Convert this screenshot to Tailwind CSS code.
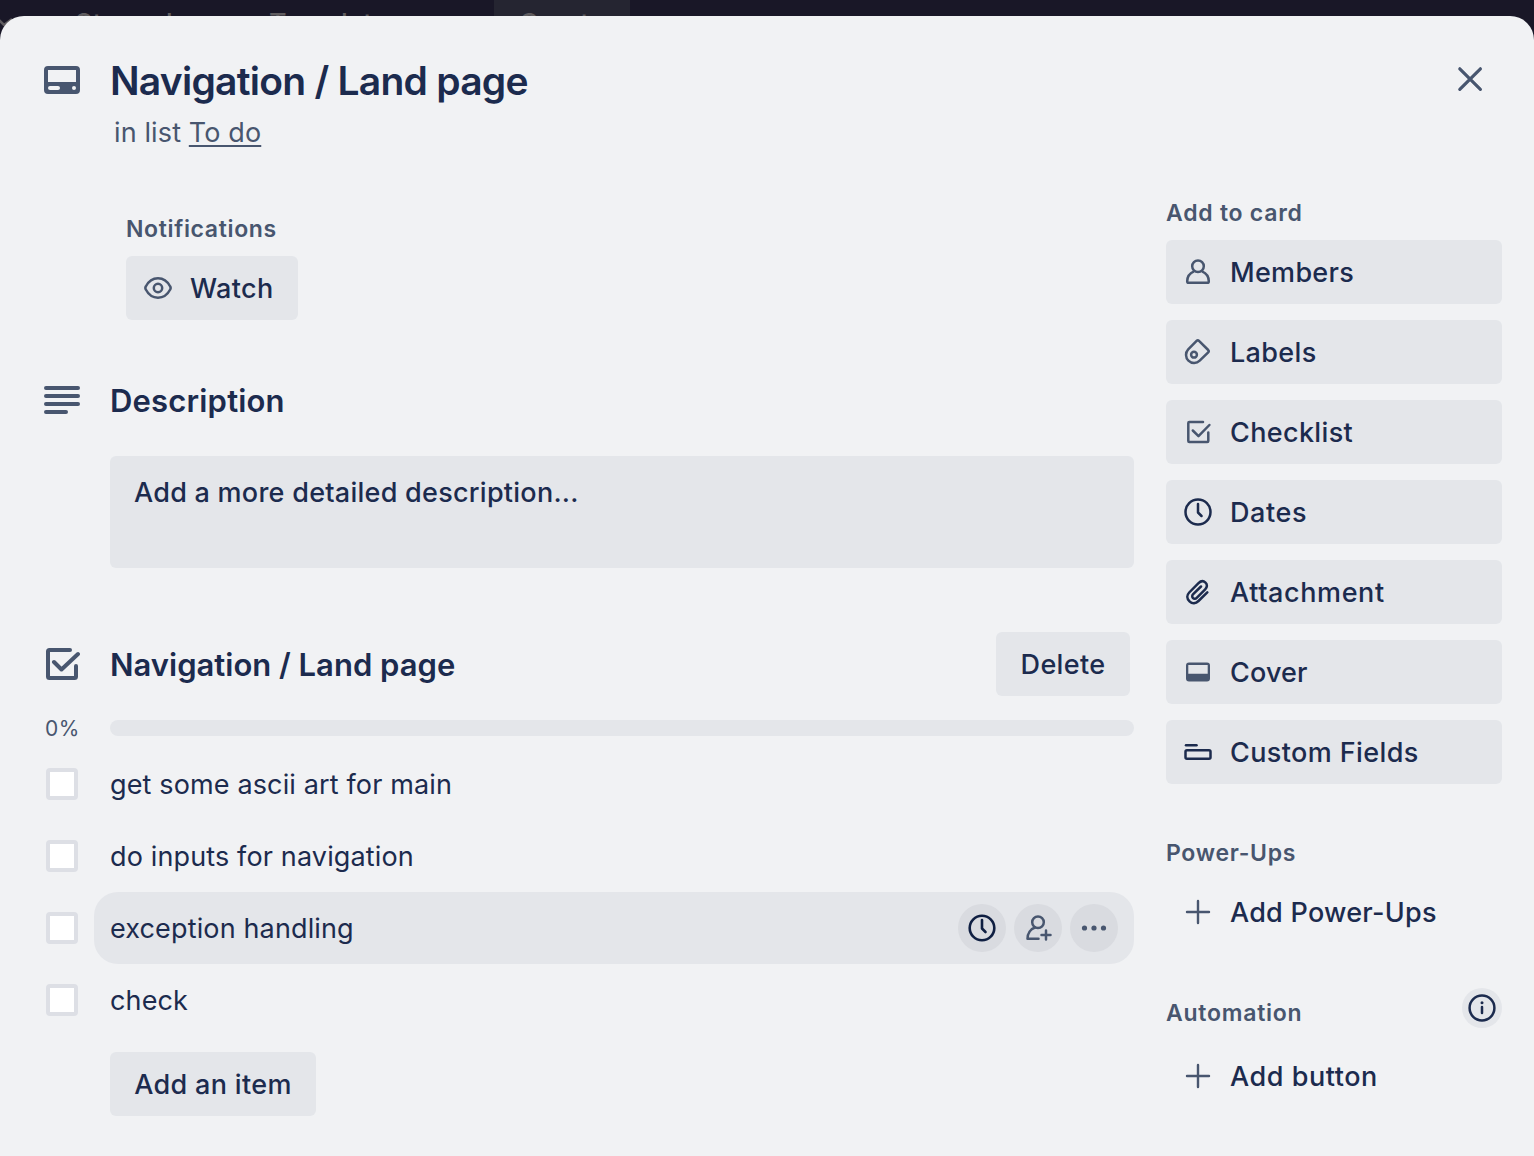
<!DOCTYPE html>
<html lang="en">
<head>
<meta charset="utf-8">
<title>Card</title>
<script src="https://cdn.jsdelivr.net/npm/@tailwindcss/browser@4"></script>
</head>
<body class="relative h-[1156px] w-[1534px] overflow-hidden bg-[#191727] font-['Inter',sans-serif] text-[27px] text-[#1c2b4e]">
<header class="absolute inset-x-0 top-0 flex h-16 text-[27px] leading-[32px] font-medium text-[#5f5c5f]">
  <svg class="absolute top-[18px] left-0 h-2 w-4" viewBox="0 0 16 8" fill="none" stroke="#5f5c5f" stroke-width="2.500"><path d="M-1 2l5 5 8-6"/></svg>
  <span class="absolute left-[75px] top-2 tracking-[0.4px]">Starred</span>
  <span class="absolute left-[269px] top-2">Templates</span>
  <span class="absolute left-[494px] top-0 h-16 w-[136px] bg-[#252531] pl-[25px] pt-2">Create</span>
</header>
<main class="relative mt-4 h-[1140px] overflow-hidden rounded-t-[24px] bg-[#f1f2f4]">
  <div class="flex h-[184px] items-start pt-10">
    <svg class="ml-[44px] mt-[10px] h-7 w-9 shrink-0" viewBox="0 0 36 28"><path fill="#48566f" fill-rule="evenodd" d="M4 0h28a4 4 0 0 1 4 4v20a4 4 0 0 1-4 4H4a4 4 0 0 1-4-4V4a4 4 0 0 1 4-4ZM4 4v12h28V4ZM6 20a2 2 0 0 0 0 4h8a2 2 0 0 0 0-4ZM30 20a2 2 0 1 0 0 4 2 2 0 0 0 0-4Z"/></svg>
    <div class="ml-[30px] pt-px">
      <h1 class="text-[39px] leading-[48px] font-semibold tracking-[-0.75px]">Navigation / Land page</h1>
      <p class="ml-1 mt-3 leading-[32px] tracking-[0.12px] text-[#48566f]">in list <span class="underline decoration-2 underline-offset-[3px]">To do</span></p>
    </div>
    <svg class="mt-[10px] mr-[51px] ml-auto h-[26px] w-[26px]" viewBox="0 0 26 26" fill="none" stroke="#48566f" stroke-width="3.2" stroke-linecap="round"><path d="M2.8 2.8l20.600 20.600M23.400 2.800l-20.600 20.600"/></svg>
  </div>
  <div class="flex">
    <section class="w-[1134px] shrink-0">
      <div class="ml-[126px] pt-[13px]">
        <h3 class="h-8 text-[23px] leading-[32px] font-semibold tracking-[0.65px] text-[#48566f]">Notifications</h3>
        <button class="mt-[11px] flex h-16 w-[172px] items-center rounded-[6px] bg-[#e4e6ea] pl-[18px] font-medium">
          <svg class="h-7 w-7" viewBox="0 0 28 28" fill="none" stroke="#48566f" stroke-width="2.500"><path d="M14 4.300c5.500 0 10 4 12.200 8.200.6 1 .6 2 0 3C24 19.700 19.500 23.700 14 23.700S4 19.700 1.800 15.500c-.6-1-.6-2 0-3C4 8.300 8.500 4.300 14 4.300Z"/><circle cx="14" cy="14" r="4.200"/></svg>
          <span class="mt-0.5 ml-[18px] tracking-[0.4px]">Watch</span>
        </button>
      </div>
      <div class="mt-[60px] flex h-10 items-center">
        <svg class="ml-[44px] h-7 w-9" viewBox="0 0 36 28" fill="none" stroke="#48566f" stroke-width="4" stroke-linecap="round"><path d="M2 2h32M2 10h32M2 18h32M2 26h20"/></svg>
        <h2 class="mt-0.5 ml-[30px] text-[31px] leading-[40px] font-semibold tracking-[0.18px]">Description</h2>
      </div>
      <div class="mt-9 ml-[110px] h-[112px] rounded-[6px] bg-[#e4e6ea] px-6 pt-[17px] leading-[40px] font-medium tracking-[0.26px]">Add a more detailed description...</div>
      <div class="mt-16 flex h-16 items-center">
        <svg class="ml-[46px] h-8 w-[34px]" viewBox="0 0 34 32" fill="none" stroke="#48566f" stroke-width="4" stroke-linecap="round" stroke-linejoin="round"><path d="M24 2H3.500Q2 2 2 3.500v25Q2 30 3.500 30h25Q30 30 30 28.500V18M8 14l7.500 7.500L32 6"/></svg>
        <h2 class="mt-0.5 ml-[30px] text-[31px] leading-[40px] font-semibold">Navigation / Land page</h2>
        <button class="mr-1 ml-auto h-16 w-[134px] rounded-[6px] bg-[#e4e6ea] pt-0.5 font-medium tracking-[0.35px]">Delete</button>
      </div>
      <div class="mt-4 flex h-8 items-center">
        <div class="mt-0.5 w-[110px] pl-[45px] text-[21px] tracking-[0.4px] text-[#48566f]">0%</div>
        <div class="h-4 flex-1 rounded-full bg-[#e4e6ea]"></div>
      </div>
      <ul class="mt-1 tracking-[0.14px]">
        <li class="flex h-[72px] items-center pl-[46px]"><i class="h-8 w-8 rounded-[4px] border-4 border-[#dddfe5] bg-white"></i><span class="mt-0.5 ml-8">get some ascii art for main</span></li>
        <li class="flex h-[72px] items-center pl-[46px]"><i class="h-8 w-8 rounded-[4px] border-4 border-[#dddfe5] bg-white"></i><span class="mt-0.5 ml-8">do inputs for navigation</span></li>
        <li class="flex h-[72px] items-center pl-[46px]"><i class="h-8 w-8 rounded-[4px] border-4 border-[#dddfe5] bg-white"></i>
          <div class="ml-4 flex h-full flex-1 items-center gap-2 rounded-[24px] bg-[#e4e6ea] px-4"><span class="mt-0.5 mr-auto">exception handling</span>
            <b class="flex h-12 w-12 items-center justify-center rounded-full bg-[#d9dbe0]"><svg class="h-7 w-7" viewBox="0 0 28 28" fill="none" stroke="#0f1f42" stroke-width="2.600" stroke-linecap="round" stroke-linejoin="round"><circle cx="14" cy="14" r="12.300"/><path d="M14 6v8.500l3.500 3.500"/></svg></b>
            <b class="flex h-12 w-12 items-center justify-center rounded-full bg-[#d9dbe0]"><svg class="h-7 w-7" viewBox="0 0 28 28" fill="none" stroke="#48566f" stroke-width="2.500" stroke-linecap="round" stroke-linejoin="round"><circle cx="14" cy="8.300" r="5.800"/><path d="M11 13.500C6.500 15 3.500 19.500 3.500 24.700H14.500M22 16.500v9M17.500 21h9"/></svg></b>
            <b class="flex h-12 w-12 items-center justify-center rounded-full bg-[#d9dbe0]"><svg class="h-7 w-7" viewBox="0 0 28 28" fill="#48566f"><circle cx="4.500" cy="14" r="2.600"/><circle cx="14" cy="14" r="2.600"/><circle cx="23.500" cy="14" r="2.600"/></svg></b>
          </div></li>
        <li class="flex h-[72px] items-center pl-[46px]"><i class="h-8 w-8 rounded-[4px] border-4 border-[#dddfe5] bg-white"></i><span class="mt-0.5 ml-8">check</span></li>
      </ul>
      <button class="mt-4 ml-[110px] h-16 w-[206px] rounded-[6px] bg-[#e4e6ea] pt-0.5 font-medium tracking-[0.35px]">Add an item</button>
    </section>
    <aside class="ml-8 w-[336px] font-medium">
      <h3 class="mb-3 h-7 text-[23px] leading-[26px] font-semibold tracking-[0.75px] text-[#48566f]">Add to card</h3>
      <div class="flex flex-col gap-4">
        <button class="flex h-16 items-center rounded-[6px] bg-[#e4e6ea] pl-[18px]"><svg class="h-7 w-7" viewBox="0 0 28 28" fill="none" stroke="#48566f" stroke-width="2.500" stroke-linejoin="round"><circle cx="14" cy="8.200" r="5.800"/><path d="M10 13.300C6 15 3.200 18.500 3.200 23.200Q3.200 24.800 4.700 24.800H23.300Q24.800 24.800 24.800 23.200C24.800 18.500 22 15 18 13.300"/></svg><span class="mt-0.5 ml-[18px] tracking-[0.3px]">Members</span></button>
        <button class="flex h-16 items-center rounded-[6px] bg-[#e4e6ea] pl-[18px]"><svg class="h-7 w-7" viewBox="0 0 28 28" fill="none" stroke="#48566f" stroke-width="2.500" stroke-linejoin="round"><path d="M4.200 11.300 12.600 2.900Q13.800 1.700 15 2.900L24.200 12Q25.300 13.200 24.200 14.300L15.700 22.700A8.100 8.100 0 0 1 4.200 11.300Z"/><circle cx="10" cy="16.700" r="2.900"/></svg><span class="mt-0.5 ml-[18px] tracking-[0.35px]">Labels</span></button>
        <button class="flex h-16 items-center rounded-[6px] bg-[#e4e6ea] pl-[18px]"><svg class="h-7 w-7" viewBox="0 0 28 28" fill="none" stroke="#48566f" stroke-width="2.500" stroke-linecap="round" stroke-linejoin="round"><path d="M19 4H5.300Q4.300 4 4.300 5v18Q4.300 24 5.300 24h18Q24.300 24 24.300 23v-8.500M8.800 12.500l5.700 5.700L25.400 7"/></svg><span class="mt-0.5 ml-[18px] tracking-[0.35px]">Checklist</span></button>
        <button class="flex h-16 items-center rounded-[6px] bg-[#e4e6ea] pl-[18px]"><svg class="h-7 w-7" viewBox="0 0 28 28" fill="none" stroke="#1c2b4e" stroke-width="2.500" stroke-linecap="round" stroke-linejoin="round"><circle cx="14" cy="14" r="12.500"/><path d="M14 6v8.500l3.500 3.500"/></svg><span class="mt-0.5 ml-[18px] tracking-[0.6px]">Dates</span></button>
        <button class="flex h-16 items-center rounded-[6px] bg-[#e4e6ea] pl-[18px]"><svg class="h-7 w-7" viewBox="0 0 28 28" fill="none" stroke="#1c2b4e" stroke-width="2.500" stroke-linecap="round" stroke-linejoin="round"><path d="M23.300 14.300 14.500 23C11.800 25.700 8.300 26 5.500 23.300S2.600 17.200 5.200 14.500L14.500 5.200C16.800 2.900 19.500 2.700 21.500 4.600S23.300 9.300 21.200 11.400L12.700 19.800C11.500 21 10.100 21.200 9 20.100S8 17.400 9.200 16.200L17 8.500"/></svg><span class="mt-0.5 ml-[18px] tracking-[0.6px]">Attachment</span></button>
        <button class="flex h-16 items-center rounded-[6px] bg-[#e4e6ea] pl-[18px]"><svg class="h-7 w-7" viewBox="0 0 28 28"><path fill="#48566f" fill-rule="evenodd" d="M5 4.500h18a3 3 0 0 1 3 3v13a3 3 0 0 1-3 3H5a3 3 0 0 1-3-3v-13a3 3 0 0 1 3-3ZM4.300 7v8.700h19.400V7Z"/></svg><span class="mt-0.5 ml-[18px] tracking-[0.15px]">Cover</span></button>
        <button class="flex h-16 items-center rounded-[6px] bg-[#e4e6ea] pl-[18px]"><svg class="h-7 w-7" viewBox="0 0 28 28" fill="none" stroke="#1c2b4e" stroke-width="2.500" stroke-linecap="round"><path d="M2 7.300h10.500"/><rect x="1.500" y="12.300" width="25" height="8.500" rx="1.500"/></svg><span class="mt-0.5 ml-[18px] tracking-[0.4px]">Custom Fields</span></button>
      </div>
      <h3 class="mt-[53px] h-8 text-[23px] leading-[32px] font-semibold tracking-[0.7px] text-[#48566f]">Power-Ups</h3>
      <button class="mt-[11px] flex h-16 items-center pl-[18px]"><svg class="h-7 w-7" viewBox="0 0 28 28" fill="none" stroke="#48566f" stroke-width="2.400" stroke-linecap="round"><path d="M14 3v22M3 14h22"/></svg><span class="mt-0.5 ml-[18px] tracking-[0.25px]">Add Power-Ups</span></button>
      <div class="mt-[44px] flex h-10 items-start justify-between">
        <h3 class="mt-[9px] text-[23px] leading-[32px] font-semibold tracking-[0.75px] text-[#48566f]">Automation</h3>
        <b class="flex h-10 w-10 items-center justify-center rounded-full bg-[#e4e6ea]"><svg class="h-7 w-7" viewBox="0 0 28 28" fill="none" stroke="#1c2b4e" stroke-width="2.500" stroke-linecap="round"><circle cx="14" cy="14" r="12.400"/><path d="M14 13v6"/><circle cx="14" cy="8.800" r="1.500" fill="#1c2b4e" stroke="none"/></svg></b>
      </div>
      <button class="mt-4 flex h-16 items-center pl-[18px]"><svg class="h-7 w-7" viewBox="0 0 28 28" fill="none" stroke="#48566f" stroke-width="2.400" stroke-linecap="round"><path d="M14 3v22M3 14h22"/></svg><span class="mt-0.5 ml-[18px] tracking-[0.55px]">Add button</span></button>
    </aside>
  </div>
</main>
</body>
</html>
